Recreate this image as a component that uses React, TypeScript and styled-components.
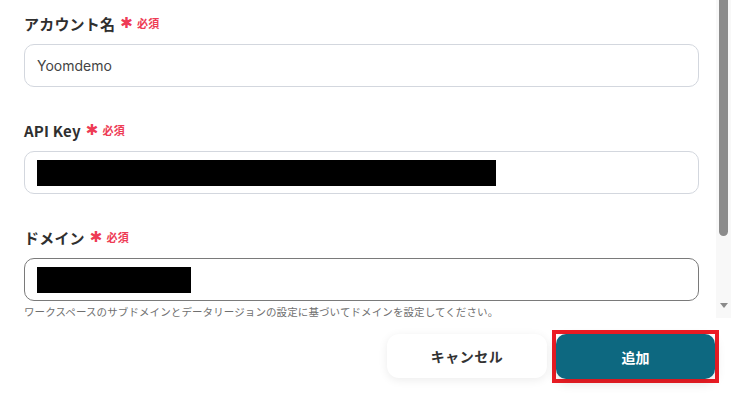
import React from "react";
import styled, { createGlobalStyle } from "styled-components";

const Global = createGlobalStyle`
  html, body { margin: 0; padding: 0; background: #ffffff; }
  body { font-family: "Noto Sans CJK JP", "Noto Sans", sans-serif; width: 738px; height: 401px; overflow: hidden; }
  * { box-sizing: border-box; }
`;

const Page = styled.div`
  width: 738px;
  height: 401px;
  display: flex;
  flex-direction: column;
  background: #fff;
`;

const ScrollArea = styled.div`
  height: 318px;
  display: flex;
  overflow: hidden;
  padding-right: 7px;
`;

const Content = styled.div`
  flex: 1;
  padding: 12px 17px 0 24px;
  display: flex;
  flex-direction: column;
`;

const Field = styled.div`
  display: flex;
  flex-direction: column;
  gap: 10px;
  margin-bottom: 32px;
  &:last-child { margin-bottom: 0; }
`;

const Label = styled.div`
  display: flex;
  align-items: center;
  height: 22px;
  font-size: 15px;
  font-weight: 700;
  color: #2f2f2f;
  letter-spacing: 0.2px;
`;

const Star = styled.span`
  color: #ee3b55;
  font-family: "DejaVu Sans", sans-serif;
  font-size: 15px;
  font-weight: 700;
  margin-left: 5px;
  line-height: 1;
`;

const Required = styled.span`
  color: #ee3b55;
  font-size: 11px;
  font-weight: 700;
  margin-left: 4px;
`;

const Input = styled.div<{ $focused?: boolean }>`
  height: 43px;
  border: 1px solid ${(p) => (p.$focused ? "#7a7a7a" : "#d3d7de")};
  border-radius: 10px;
  display: flex;
  align-items: center;
  padding: 0 12px;
  font-size: 14px;
  color: #444;
  font-family: Inter, "Noto Sans", sans-serif;
`;

const Redacted = styled.div<{ $w: number }>`
  width: ${(p) => p.$w}px;
  height: 26px;
  background: #000;
`;

const Helper = styled.div`
  margin-top: -7px;
  font-size: 10.5px;
  line-height: 16px;
  color: #6f6f6f;
  letter-spacing: 0.1px;
  white-space: nowrap;
`;

const Scrollbar = styled.div`
  width: 15px;
  height: 318px;
  background: #f8f8f8;
  display: flex;
  flex-direction: column;
  align-items: center;
  padding-bottom: 5px;
`;

const Thumb = styled.div`
  width: 9px;
  height: 236px;
  background: #8c8c8c;
  border-radius: 0 0 5px 5px;
`;

const Spacer = styled.div`
  flex: 1;
`;

const Arrow = styled.div`
  width: 0;
  height: 0;
  border-left: 4px solid transparent;
  border-right: 4px solid transparent;
  border-top: 5px solid #8a8a8a;
  margin-bottom: 5px;
`;

const Footer = styled.div`
  flex: 1;
  display: flex;
  justify-content: flex-end;
  align-items: flex-start;
  padding: 12px 19px 0 0;
  gap: 5px;
`;

const CancelButton = styled.button`
  margin-top: 4px;
  width: 160px;
  height: 44px;
  border: none;
  border-radius: 12px;
  background: #fff;
  box-shadow: 0 2px 10px rgba(0, 0, 0, 0.08);
  font-family: "Noto Sans CJK JP", sans-serif;
  font-size: 14px;
  font-weight: 700;
  color: #333;
  letter-spacing: 0.5px;
`;

const Highlight = styled.div`
  border: 4px solid #ec1c24;
  background: #fff;
`;

const PrimaryButton = styled.button`
  display: block;
  width: 159px;
  height: 45px;
  border: none;
  border-radius: 10px;
  background: #0d6880;
  color: #fff;
  font-family: "Noto Sans CJK JP", sans-serif;
  font-size: 14px;
  font-weight: 700;
  box-shadow: 0 4px 12px rgba(0, 0, 0, 0.12);
`;

export default function App() {
  return (
    <Page>
      <Global />
      <ScrollArea>
        <Content>
          <Field>
            <Label>
              アカウント名<Star>✱</Star>
              <Required>必須</Required>
            </Label>
            <Input>Yoomdemo</Input>
          </Field>
          <Field>
            <Label>
              API Key<Star>✱</Star>
              <Required>必須</Required>
            </Label>
            <Input>
              <Redacted $w={459} />
            </Input>
          </Field>
          <Field>
            <Label>
              ドメイン<Star>✱</Star>
              <Required>必須</Required>
            </Label>
            <Input $focused>
              <Redacted $w={154} />
            </Input>
            <Helper>
              ワークスペースのサブドメインとデータリージョンの設定に基づいてドメインを設定してください。
            </Helper>
          </Field>
        </Content>
        <Scrollbar>
          <Thumb />
          <Spacer />
          <Arrow />
        </Scrollbar>
      </ScrollArea>
      <Footer>
        <CancelButton>キャンセル</CancelButton>
        <Highlight>
          <PrimaryButton>追加</PrimaryButton>
        </Highlight>
      </Footer>
    </Page>
  );
}
